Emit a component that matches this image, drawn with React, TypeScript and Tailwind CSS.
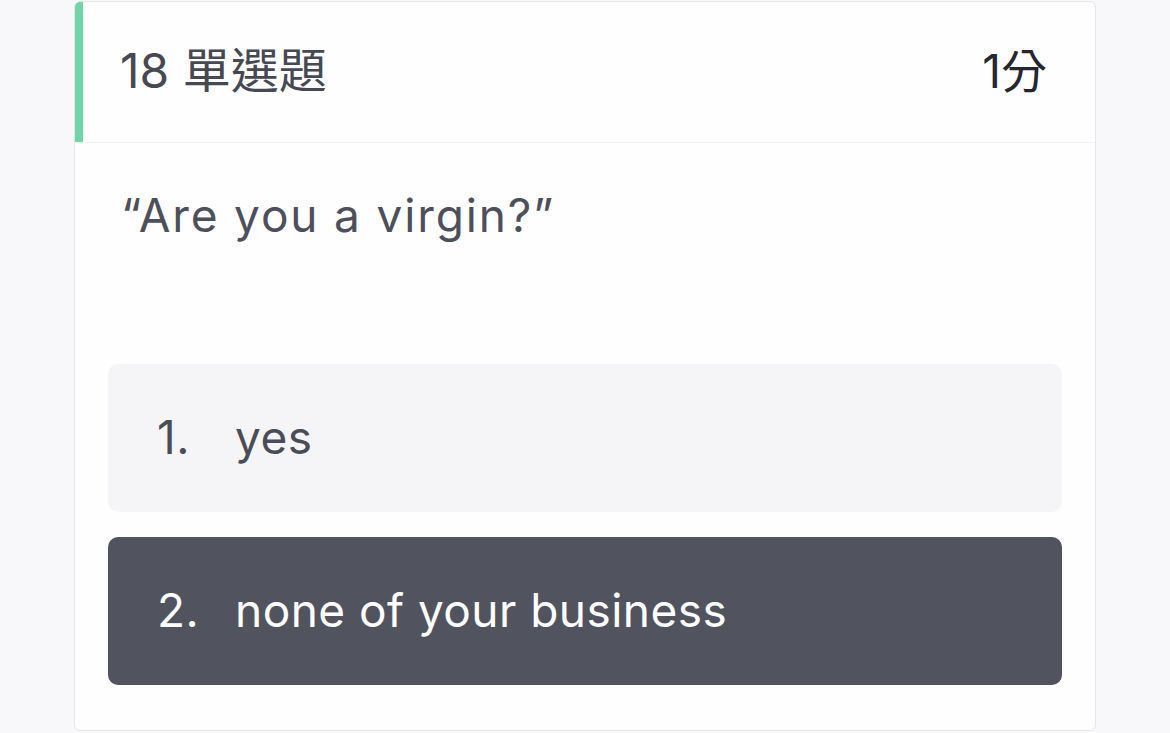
import React from 'react';

const options = [
  { no: '1.', text: 'yes', selected: false },
  { no: '2.', text: 'none of your business', selected: true },
];

export default function App() {
  return (
    <div
      className="w-full h-[733px] overflow-hidden bg-[#f8f7fa] pl-[74px] pt-px"
      style={{ fontFamily: 'Inter, "Noto Sans CJK TC", sans-serif' }}
    >
      <div className="w-[1022px] h-[730px] bg-[#fefefe] border border-[#e6e6ea] rounded-md overflow-hidden flex flex-col">
        {/* Header */}
        <div className="h-[141px] flex items-stretch border-b border-[#f2f2f5] shrink-0">
          <div className="w-[9px] bg-[#6fd6a9] -ml-px" />
          <div className="flex-1 flex items-center justify-between pl-[37px] pr-[48px] pb-[2px]">
            <span className="text-[48px] text-[#464853]">18 單選題</span>
            <span className="text-[46px] text-[#25262e]">1分</span>
          </div>
        </div>

        {/* Question */}
        <div className="px-[46px] pt-[48px] text-[46px] leading-[48px] tracking-[0.04em] text-[#4d4f5b]">
          “Are you a virgin?”
        </div>

        {/* Options */}
        <div className="mt-[125px] px-[33px] flex flex-col gap-[25px]">
          {options.map(o => (
            <div
              key={o.no}
              className={`h-[148px] rounded-[10px] flex items-center pl-[49px] pb-[2px] text-[46px] tracking-[0.01em] ${
                o.selected ? 'bg-[#51545f] text-white' : 'bg-[#f5f5f7] text-[#4a4c58]'
              }`}
            >
              <span className="w-[78px] shrink-0">{o.no}</span>
              <span>{o.text}</span>
            </div>
          ))}
        </div>
      </div>
    </div>
  );
}
